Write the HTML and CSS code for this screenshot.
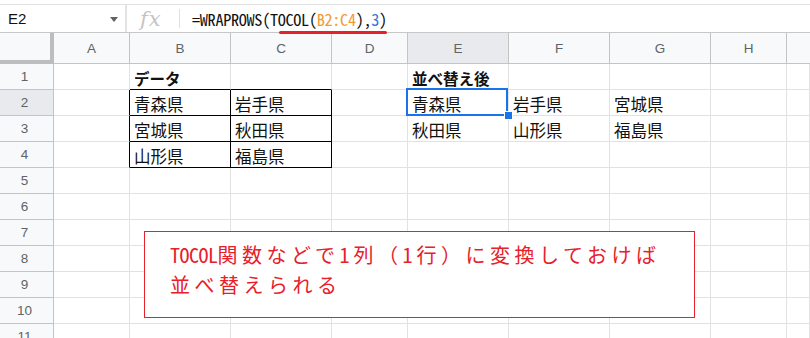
FILE: index.html
```html
<!DOCTYPE html>
<html lang="ja">
<head>
<meta charset="utf-8">
<link rel="stylesheet" href="styles.css">
</head>
<body>
<div class="app">
  <div class="topgap"></div>
  <div class="fbar">
    <div class="namebox"><span class="ref">E2</span><span class="caret"></span></div>
    <div class="fx">fx</div>
    <div class="formula"><span class="mono">=WRAPROWS(TOCOL(<span class="orange">B2:C4</span>),<span class="blue">3</span>)</span></div>
    <div class="underline"></div>
  </div>
  <div class="sheet">
    <div class="corner"></div>
    <div class="ch">A</div><div class="ch">B</div><div class="ch">C</div><div class="ch">D</div><div class="ch sel">E</div><div class="ch">F</div><div class="ch">G</div><div class="ch">H</div><div class="ch last"></div>

    <div class="rh">1</div>
    <div class="c"></div><div class="c b bb"><b>データ</b></div><div class="c bb"></div><div class="c"></div><div class="c b"><b>並べ替え後</b></div><div class="c"></div><div class="c"></div><div class="c"></div><div class="c"></div>

    <div class="rh sel">2</div>
    <div class="c br"></div><div class="c bx">青森県</div><div class="c bx">岩手県</div><div class="c"></div><div class="c active">青森県<span class="handle"></span></div><div class="c">岩手県</div><div class="c">宮城県</div><div class="c"></div><div class="c"></div>

    <div class="rh">3</div>
    <div class="c br"></div><div class="c bx">宮城県</div><div class="c bx">秋田県</div><div class="c"></div><div class="c">秋田県</div><div class="c">山形県</div><div class="c">福島県</div><div class="c"></div><div class="c"></div>

    <div class="rh">4</div>
    <div class="c br"></div><div class="c bx">山形県</div><div class="c bx">福島県</div><div class="c"></div><div class="c"></div><div class="c"></div><div class="c"></div><div class="c"></div><div class="c"></div>

    <div class="rh">5</div>
    <div class="c"></div><div class="c"></div><div class="c"></div><div class="c"></div><div class="c"></div><div class="c"></div><div class="c"></div><div class="c"></div><div class="c"></div>
    <div class="rh">6</div>
    <div class="c"></div><div class="c"></div><div class="c"></div><div class="c"></div><div class="c"></div><div class="c"></div><div class="c"></div><div class="c"></div><div class="c"></div>
    <div class="rh">7</div>
    <div class="c"></div><div class="c"></div><div class="c"></div><div class="c"></div><div class="c"></div><div class="c"></div><div class="c"></div><div class="c"></div><div class="c"></div>
    <div class="rh">8</div>
    <div class="c"></div><div class="c"></div><div class="c"></div><div class="c"></div><div class="c"></div><div class="c"></div><div class="c"></div><div class="c"></div><div class="c"></div>
    <div class="rh">9</div>
    <div class="c"></div><div class="c"></div><div class="c"></div><div class="c"></div><div class="c"></div><div class="c"></div><div class="c"></div><div class="c"></div><div class="c"></div>
    <div class="rh">10</div>
    <div class="c"></div><div class="c"></div><div class="c"></div><div class="c"></div><div class="c"></div><div class="c"></div><div class="c"></div><div class="c"></div><div class="c"></div>
    <div class="rh">11</div>
    <div class="c"></div><div class="c"></div><div class="c"></div><div class="c"></div><div class="c"></div><div class="c"></div><div class="c"></div><div class="c"></div><div class="c"></div>
  </div>
  <div class="note">
    <div class="line"><span class="lat">TOCOL</span>関数などで<span class="lat num">1</span>列（<span class="lat num">1</span>行）に変換しておけば</div>
    <div class="line">並べ替えられる</div>
  </div>
</div>
</body>
</html>
```

FILE: styles.css
```css
* { box-sizing: border-box; }
html, body { margin: 0; padding: 0; background: #fff; }
body { width: 810px; height: 338px; overflow: hidden; font-family: "Liberation Sans", Arial, "Noto Sans CJK JP", sans-serif; }
.app { position: relative; width: 810px; height: 338px; overflow: hidden; }

.topgap { height: 5px; border-bottom: 1px solid #e1e1e1; }
.fbar { position: relative; display: flex; height: 28px; border-bottom: 1px solid #c7c7c7; align-items: stretch; }
.namebox { width: 127px; display: flex; align-items: center; padding-left: 8px; border-right: 2px solid #e3e3e3; position: relative; }
.ref { font-size: 15px; color: #111; }
.caret { position: absolute; left: 110px; top: 12px; width: 0; height: 0; border-left: 4.5px solid transparent; border-right: 4.5px solid transparent; border-top: 5px solid #5f6368; }
.fx { width: 53px; display: flex; align-items: center; padding-left: 13px; font-family: "DejaVu Serif", "Liberation Serif", serif; font-style: italic; font-size: 21px; color: #c4c4c4; position: relative; letter-spacing: 1px; }
.fx::after { content: ""; position: absolute; right: 0; top: 4px; bottom: 4px; width: 1px; background: #e0e0e0; }
.formula { display: flex; align-items: center; padding-left: 12px; white-space: nowrap; }
.mono { font-family: "Noto Sans CJK JP", sans-serif; font-feature-settings: "hwid"; font-size: 16.2px; color: #111; letter-spacing: -0.3px; }
.orange { color: #f29a38; }
.blue { color: #3b73d6; }
.underline { position: absolute; left: 279px; top: 26px; width: 108px; height: 3px; border-radius: 2px; background: #e5222b; }

.sheet { display: grid; grid-template-columns: 54px 76px 101px 101px 76px 101px 101px 101px 76px 1fr; grid-template-rows: 31px; grid-auto-rows: 26px; }
.corner { background: #f8f9fa; border-right: 4px solid #bdbdbd; border-bottom: 4px solid #bdbdbd; }
.ch { background: #f8f9fa; border-right: 1px solid #c4c4c4; border-bottom: 1px solid #c4c4c4; display: flex; align-items: center; justify-content: center; font-size: 13.5px; color: #5f6368; padding-top: 1px; }
.ch.sel { background: #e8eaed; }
.ch.last { border-right: none; }
.rh { background: #f8f9fa; border-right: 1px solid #c4c4c4; border-bottom: 1px solid #c4c4c4; display: flex; align-items: center; justify-content: center; font-size: 13.5px; color: #5f6368; padding-right: 4px; }
.rh.sel { background: #e8eaed; }
.c { position: relative; border-right: 1px solid #e2e2e2; border-bottom: 1px solid #e2e2e2; display: flex; align-items: center; padding-left: 4px; padding-top: 2px; font-family: "Noto Sans CJK JP", sans-serif; font-size: 16.5px; color: #111; white-space: nowrap; }
.c b { font-weight: 700; font-size: 15.5px; }
.c.bb { border-bottom-color: #000; }
.c.br { border-right-color: #000; }
.c.bx { border-right-color: #000; border-bottom-color: #000; }
.c.active::after { content: ""; position: absolute; left: -2px; top: -2px; right: 0; bottom: -1px; border: 2px solid #1a73e8; }
.handle { position: absolute; right: -4px; bottom: -4px; width: 7px; height: 7px; background: #1a73e8; border: 1px solid #fff; z-index: 2; box-sizing: content-box; margin: -1px; }

.note { position: absolute; left: 144px; top: 231px; width: 551px; height: 87px; background: #fff; border: 1px solid #e8202a; padding: 8px 0 0 25px; color: #e8202a; font-family: "Noto Sans CJK JP", sans-serif; font-size: 20px; line-height: 30px; letter-spacing: 4.5px; }
.line { white-space: nowrap; }
.lat { font-feature-settings: "hwid"; letter-spacing: -0.5px; }
.lat.num { letter-spacing: 4px; }
```
